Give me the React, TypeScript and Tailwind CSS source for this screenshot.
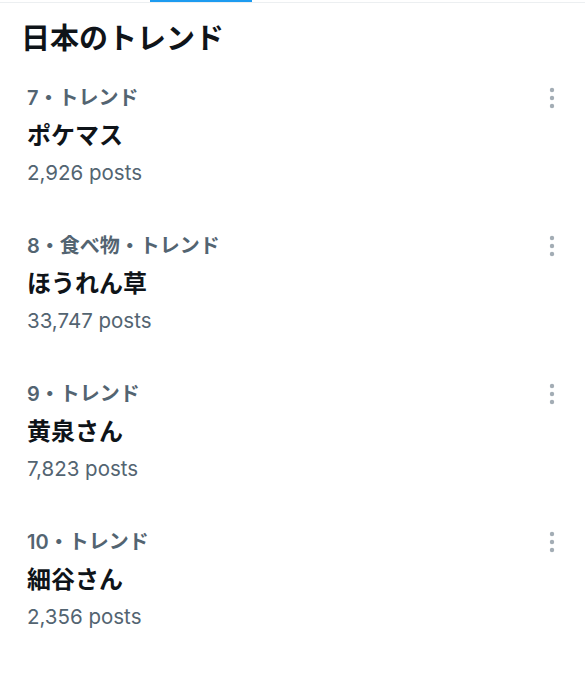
import React from "react";

const items = [
  { cat: "7・トレンド", title: "ポケマス", posts: "2,926 posts" },
  { cat: "8・食べ物・トレンド", title: "ほうれん草", posts: "33,747 posts" },
  { cat: "9・トレンド", title: "黄泉さん", posts: "7,823 posts" },
  { cat: "10・トレンド", title: "細谷さん", posts: "2,356 posts" },
];

function Dots() {
  return (
    <svg width="6" height="22" viewBox="0 0 6 22" className="text-[#a3adb5]">
      <circle cx="3" cy="3" r="2.2" fill="currentColor" />
      <circle cx="3" cy="11" r="2.2" fill="currentColor" />
      <circle cx="3" cy="19" r="2.2" fill="currentColor" />
    </svg>
  );
}

export default function App() {
  return (
    <div
      className="w-[585px] h-[680px] bg-white overflow-hidden"
      style={{ fontFamily: '"Inter", "Noto Sans CJK JP", sans-serif' }}
    >
      <div className="relative h-[3px] border-b border-[#eceff1]">
        <div className="absolute left-[150px] top-0 w-[102px] h-[2px] bg-[#1d9bf0]" />
      </div>
      <h1 className="px-[21px] pt-[18px] text-[29px] leading-[36px] font-semibold text-[#0f1419]">
        日本のトレンド
      </h1>
      <div className="mt-[3px]">
        {items.map((it) => (
          <div key={it.title} className="flex justify-between pl-[27px] pr-[30px] pt-[19px] pb-[17px]">
            <div className="flex flex-col">
              <div className="text-[20px] leading-[38px] font-semibold text-[#536471]">{it.cat}</div>
              <div className="text-[24px] leading-[38px] font-bold text-[#0f1419]">{it.title}</div>
              <div className="text-[20.5px] leading-[36px] text-[#536471]">{it.posts}</div>
            </div>
            <div className="pt-[8px]">
              <Dots />
            </div>
          </div>
        ))}
      </div>
    </div>
  );
}
